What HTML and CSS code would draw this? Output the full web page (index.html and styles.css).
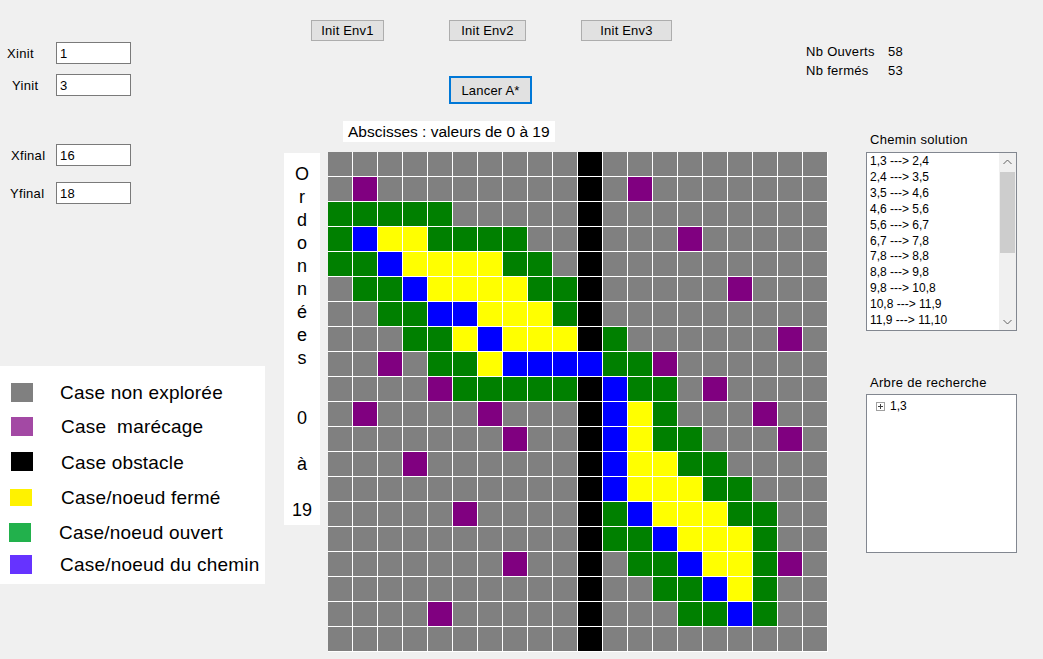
FILE: index.html
```html
<!DOCTYPE html>
<html lang="fr">
<head>
<meta charset="utf-8">
<title>Recherche A*</title>
<link rel="stylesheet" href="styles.css">
</head>
<body>
<div class="form">
  <div class="left">
    <div class="fields">
      <div class="field f-xinit"><label>Xinit</label><div class="textbox">1</div></div>
      <div class="field f-yinit"><label>Yinit</label><div class="textbox">3</div></div>
      <div class="field f-xfinal"><label>Xfinal</label><div class="textbox">16</div></div>
      <div class="field f-yfinal"><label>Yfinal</label><div class="textbox">18</div></div>
    </div>
    <div class="legend">
      <div class="leg-row r1"><span class="swatch sw-u"></span><span class="leg-text">Case non explorée</span></div>
      <div class="leg-row r2"><span class="swatch sw-m"></span><span class="leg-text t2">Case&nbsp; marécage</span></div>
      <div class="leg-row r3"><span class="swatch sw-x"></span><span class="leg-text t2">Case obstacle</span></div>
      <div class="leg-row r4"><span class="swatch sw-f"></span><span class="leg-text t2">Case/noeud fermé</span></div>
      <div class="leg-row r5"><span class="swatch sw-o"></span><span class="leg-text t3">Case/noeud ouvert</span></div>
      <div class="leg-row r6"><span class="swatch sw-p"></span><span class="leg-text t3">Case/noeud du chemin</span></div>
    </div>
  </div>

  <div class="main">
    <div class="top">
      <div class="actions">
        <div class="btn-row">
          <button class="btn b1">Init Env1</button>
          <button class="btn b2">Init Env2</button>
          <button class="btn b3">Init Env3</button>
        </div>
        <button class="btn btn-run">Lancer A*</button>
      </div>
      <div class="counts">
        <span>Nb Ouverts</span><span>58</span>
        <span>Nb fermés</span><span>53</span>
      </div>
    </div>

    <div class="bottom">
      <div class="board">
        <div class="abs-label">Abscisses : valeurs de 0 à 19</div>
        <div class="board-row">
          <div class="ord-label">
            <div class="ord-word">O<br>r<br>d<br>o<br>n<br>n<br>é<br>e<br>s</div>
            <div class="ord-range">0<br><br>à<br><br>19</div>
          </div>
          <div class="grid">
            <span></span><span></span><span></span><span></span><span></span><span></span><span></span><span></span><span></span><span></span><span class="x"></span><span></span><span></span><span></span><span></span><span></span><span></span><span></span><span></span><span></span>
            <span></span><span class="m"></span><span></span><span></span><span></span><span></span><span></span><span></span><span></span><span></span><span class="x"></span><span></span><span class="m"></span><span></span><span></span><span></span><span></span><span></span><span></span><span></span>
            <span class="o"></span><span class="o"></span><span class="o"></span><span class="o"></span><span class="o"></span><span></span><span></span><span></span><span></span><span></span><span class="x"></span><span></span><span></span><span></span><span></span><span></span><span></span><span></span><span></span><span></span>
            <span class="o"></span><span class="p"></span><span class="f"></span><span class="f"></span><span class="o"></span><span class="o"></span><span class="o"></span><span class="o"></span><span></span><span></span><span class="x"></span><span></span><span></span><span></span><span class="m"></span><span></span><span></span><span></span><span></span><span></span>
            <span class="o"></span><span class="o"></span><span class="p"></span><span class="f"></span><span class="f"></span><span class="f"></span><span class="f"></span><span class="o"></span><span class="o"></span><span></span><span class="x"></span><span></span><span></span><span></span><span></span><span></span><span></span><span></span><span></span><span></span>
            <span></span><span class="o"></span><span class="o"></span><span class="p"></span><span class="f"></span><span class="f"></span><span class="f"></span><span class="f"></span><span class="o"></span><span class="o"></span><span class="x"></span><span></span><span></span><span></span><span></span><span></span><span class="m"></span><span></span><span></span><span></span>
            <span></span><span></span><span class="o"></span><span class="o"></span><span class="p"></span><span class="p"></span><span class="f"></span><span class="f"></span><span class="f"></span><span class="o"></span><span class="x"></span><span></span><span></span><span></span><span></span><span></span><span></span><span></span><span></span><span></span>
            <span></span><span></span><span></span><span class="o"></span><span class="o"></span><span class="f"></span><span class="p"></span><span class="f"></span><span class="f"></span><span class="f"></span><span class="x"></span><span class="o"></span><span></span><span></span><span></span><span></span><span></span><span></span><span class="m"></span><span></span>
            <span></span><span></span><span class="m"></span><span></span><span class="o"></span><span class="o"></span><span class="f"></span><span class="p"></span><span class="p"></span><span class="p"></span><span class="p"></span><span class="o"></span><span class="o"></span><span class="m"></span><span></span><span></span><span></span><span></span><span></span><span></span>
            <span></span><span></span><span></span><span></span><span class="m"></span><span class="o"></span><span class="o"></span><span class="o"></span><span class="o"></span><span class="o"></span><span class="x"></span><span class="p"></span><span class="o"></span><span class="o"></span><span></span><span class="m"></span><span></span><span></span><span></span><span></span>
            <span></span><span class="m"></span><span></span><span></span><span></span><span></span><span class="m"></span><span></span><span></span><span></span><span class="x"></span><span class="p"></span><span class="f"></span><span class="o"></span><span></span><span></span><span></span><span class="m"></span><span></span><span></span>
            <span></span><span></span><span></span><span></span><span></span><span></span><span></span><span class="m"></span><span></span><span></span><span class="x"></span><span class="p"></span><span class="f"></span><span class="o"></span><span class="o"></span><span></span><span></span><span></span><span class="m"></span><span></span>
            <span></span><span></span><span></span><span class="m"></span><span></span><span></span><span></span><span></span><span></span><span></span><span class="x"></span><span class="p"></span><span class="f"></span><span class="f"></span><span class="o"></span><span class="o"></span><span></span><span></span><span></span><span></span>
            <span></span><span></span><span></span><span></span><span></span><span></span><span></span><span></span><span></span><span></span><span class="x"></span><span class="p"></span><span class="f"></span><span class="f"></span><span class="f"></span><span class="o"></span><span class="o"></span><span></span><span></span><span></span>
            <span></span><span></span><span></span><span></span><span></span><span class="m"></span><span></span><span></span><span></span><span></span><span class="x"></span><span class="o"></span><span class="p"></span><span class="f"></span><span class="f"></span><span class="f"></span><span class="o"></span><span class="o"></span><span></span><span></span>
            <span></span><span></span><span></span><span></span><span></span><span></span><span></span><span></span><span></span><span></span><span class="x"></span><span class="o"></span><span class="o"></span><span class="p"></span><span class="f"></span><span class="f"></span><span class="f"></span><span class="o"></span><span></span><span></span>
            <span></span><span></span><span></span><span></span><span></span><span></span><span></span><span class="m"></span><span></span><span></span><span class="x"></span><span></span><span class="o"></span><span class="o"></span><span class="p"></span><span class="f"></span><span class="f"></span><span class="o"></span><span class="m"></span><span></span>
            <span></span><span></span><span></span><span></span><span></span><span></span><span></span><span></span><span></span><span></span><span class="x"></span><span></span><span></span><span class="o"></span><span class="o"></span><span class="p"></span><span class="f"></span><span class="o"></span><span></span><span></span>
            <span></span><span></span><span></span><span></span><span class="m"></span><span></span><span></span><span></span><span></span><span></span><span class="x"></span><span></span><span></span><span></span><span class="o"></span><span class="o"></span><span class="p"></span><span class="o"></span><span></span><span></span>
            <span></span><span></span><span></span><span></span><span></span><span></span><span></span><span></span><span></span><span></span><span class="x"></span><span></span><span></span><span></span><span></span><span></span><span></span><span></span><span></span><span></span>
          </div>
        </div>
      </div>

      <div class="side">
        <div class="side-label">Chemin solution</div>
        <div class="listbox">
          <div class="list-items">
            <div>1,3 ---&gt; 2,4</div>
            <div>2,4 ---&gt; 3,5</div>
            <div>3,5 ---&gt; 4,6</div>
            <div>4,6 ---&gt; 5,6</div>
            <div>5,6 ---&gt; 6,7</div>
            <div>6,7 ---&gt; 7,8</div>
            <div>7,8 ---&gt; 8,8</div>
            <div>8,8 ---&gt; 9,8</div>
            <div>9,8 ---&gt; 10,8</div>
            <div>10,8 ---&gt; 11,9</div>
            <div>11,9 ---&gt; 11,10</div>
          </div>
          <div class="vscroll">
            <div class="arrow"><svg width="9" height="6" viewBox="0 0 9 6"><path d="M0.5 5 L4.5 1 L8.5 5" fill="none" stroke="#606060" stroke-width="1"/></svg></div>
            <div class="track"><div class="thumb"></div></div>
            <div class="arrow"><svg width="9" height="6" viewBox="0 0 9 6"><path d="M0.5 1 L4.5 5 L8.5 1" fill="none" stroke="#606060" stroke-width="1"/></svg></div>
          </div>
        </div>
        <div class="side-label tree-label">Arbre de recherche</div>
        <div class="treebox">
          <div class="tree-node">
            <svg class="expander" width="9" height="9" viewBox="0 0 9 9"><rect x="0.5" y="0.5" width="8" height="8" fill="#fff" stroke="#a0a0a0"/><path d="M2 4.5 H7 M4.5 2 V7" stroke="#404040" stroke-width="1"/></svg>
            <span>1,3</span>
          </div>
        </div>
      </div>
    </div>
  </div>
</div>
</body>
</html>
```

FILE: styles.css
```css
* {
  box-sizing: border-box;
}

body {
  margin: 0;
  background: #f0f0f0;
  font-family: "Liberation Sans", Arial, sans-serif;
  font-size: 13px;
  color: #000;
}

.form {
  display: flex;
  width: 1043px;
  height: 659px;
  overflow: hidden;
}

/* ---------- left column ---------- */
.left {
  width: 284px;
  flex: none;
  display: flex;
  flex-direction: column;
}

.fields {
  padding-top: 42px;
}

.field {
  display: flex;
  align-items: center;
  height: 22px;
  letter-spacing: 0.3px;
}

.field + .field {
  margin-top: 10px;
}

.field.f-xfinal {
  margin-top: 48px;
}

.field.f-yfinal {
  margin-top: 16px;
}

.field label {
  width: 56px;
}

.f-xinit label { padding-left: 7px; }
.f-yinit label { padding-left: 12px; }
.f-xfinal label { padding-left: 11px; }
.f-yfinal label { padding-left: 10px; }

.textbox {
  width: 75px;
  height: 22px;
  background: #fff;
  border: 1px solid #7a7a7a;
  padding-left: 3px;
  display: flex;
  align-items: center;
}

.legend {
  margin-top: 162px;
  width: 265px;
  background: #fff;
  padding-top: 8px;
  padding-bottom: 7px;
}

.leg-row {
  display: flex;
  align-items: center;
}

.leg-row.r1 { height: 36px; }
.leg-row.r2 { height: 32px; }
.leg-row.r3 { height: 39px; }
.leg-row.r4 { height: 32px; }
.leg-row.r5 { height: 38px; }
.leg-row.r6 { height: 26px; }

.swatch {
  width: 22px;
  height: 19px;
  margin-left: 11px;
  flex: none;
}

.sw-u { background: #808080; }
.sw-m { background: #a349a4; }
.sw-x { background: #000; }
.sw-f { background: #fff200; height: 17px; margin-left: 10px; }
.sw-o { background: #22b14c; margin-left: 9px; }
.sw-p { background: #6633ff; margin-left: 10px; }

.leg-text {
  font-size: 19px;
  margin-left: 27px;
  padding-top: 2px;
  letter-spacing: 0.2px;
}

.leg-text.t2 { margin-left: 28px; }
.sw-f + .leg-text { margin-left: 29px; }
.leg-text.t3 { margin-left: 28px; }

/* ---------- main area ---------- */
.main {
  width: 759px;
  flex: none;
  display: flex;
  flex-direction: column;
}

.top {
  height: 120px;
  display: flex;
}

.actions {
  width: 522px;
  padding-top: 20px;
}

.btn-row {
  display: flex;
}

.btn {
  font-family: inherit;
  font-size: 13px;
  color: #000;
  background: #e1e1e1;
  border: 1px solid #adadad;
  height: 21px;
  padding: 0;
  letter-spacing: 0.2px;
}

.b1 { width: 73px; margin-left: 27px; }
.b2 { width: 77px; margin-left: 65px; }
.b3 { width: 91px; margin-left: 55px; }

.btn-run {
  display: block;
  width: 83px;
  height: 28px;
  margin: 35px 0 0 165px;
  border: 2px solid #0078d7;
}

.counts {
  padding-top: 42px;
  display: grid;
  grid-template-columns: 82px auto;
  grid-auto-rows: 19px;
  align-content: start;
  align-items: center;
  letter-spacing: 0.3px;
}

.bottom {
  display: flex;
  flex: 1;
}

.board {
  width: 544px;
  flex: none;
}

.abs-label {
  display: inline-block;
  margin: 1px 0 0 59px;
  background: #fff;
  height: 21px;
  line-height: 21px;
  padding: 0 5px;
  font-size: 15.5px;
}

.board-row {
  display: flex;
  align-items: flex-start;
  margin-top: 10px;
}

.ord-label {
  width: 36px;
  height: 372px;
  margin-top: 1px;
  background: #fff;
  text-align: center;
  font-size: 18px;
  line-height: 23px;
  padding-top: 10px;
}

.ord-range {
  margin-top: 37px;
}

.grid {
  margin-left: 8px;
  display: grid;
  grid-template-columns: repeat(20, 24px);
  grid-auto-rows: 24px;
  gap: 1px;
  padding: 0 1px 1px 0;
  background: #fff;
}

.grid span { background: #808080; }
.grid span.m { background: #800080; }
.grid span.x { background: #000; }
.grid span.o { background: #008000; }
.grid span.f { background: #ffff00; }
.grid span.p { background: #0000ff; }

/* ---------- right side ---------- */
.side {
  padding: 12px 0 0 38px;
}

.side-label {
  line-height: 15px;
  padding-left: 4px;
  letter-spacing: 0.3px;
}

.listbox {
  width: 151px;
  height: 179px;
  margin-top: 5px;
  background: #fff;
  border: 1px solid #828790;
  display: flex;
  overflow: hidden;
}

.list-items {
  flex: 1;
  padding: 1px 0 0 3px;
  font-size: 12px;
  line-height: 15.9px;
}

.vscroll {
  width: 17px;
  flex: none;
  background: #f0f0f0;
  display: flex;
  flex-direction: column;
}

.arrow {
  height: 17px;
  display: flex;
  align-items: center;
  justify-content: center;
}

.track {
  flex: 1;
  padding: 2px 1px 0;
}

.thumb {
  height: 81px;
  background: #cdcdcd;
}

.tree-label {
  margin-top: 44px;
}

.treebox {
  width: 151px;
  height: 159px;
  margin-top: 4px;
  background: #fff;
  border: 1px solid #828790;
  padding: 4px 0 0 9px;
}

.tree-node {
  display: flex;
  align-items: center;
  gap: 5px;
  font-size: 12px;
  line-height: 14px;
}
```
